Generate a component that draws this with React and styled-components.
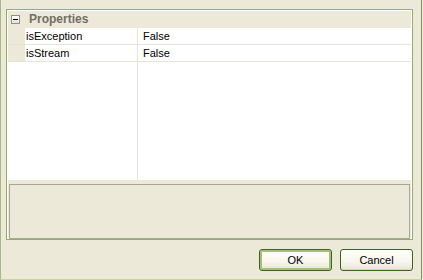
import styled, { createGlobalStyle } from "styled-components";

const Global = createGlobalStyle`
    html, body {
        margin: 0;
        padding: 0;
        background: #ECE9D8;
    }
    * {
        box-sizing: border-box;
    }
`;

const props = [
    { name: "isException", value: "False" },
    { name: "isStream", value: "False" },
];

export default function App() {
    return (
        <Window>
            <Global />
            <Grid>
                <GridBody>
                    <Category>
                        <Toggle />
                        <span>Properties</span>
                    </Category>
                    {props.map((p) => (
                        <Row key={p.name}>
                            <Gutter />
                            <NameCell>{p.name}</NameCell>
                            <ValueCell>{p.value}</ValueCell>
                        </Row>
                    ))}
                    <Filler>
                        <FillerName />
                        <FillerValue />
                    </Filler>
                </GridBody>
                <Splitter />
                <Description />
            </Grid>
            <Buttons>
                <Button $default>OK</Button>
                <Button>Cancel</Button>
            </Buttons>
        </Window>
    );
}

const Window = styled.div`
    width: 422px;
    height: 280px;
    background: #ECE9D8;
    border-left: 1px solid #A6BA84;
    border-right: 1px solid #7E9A55;
    border-bottom: 1px solid #C6D2AA;
    padding: 9px 8px 0 5px;
    display: flex;
    flex-direction: column;
    font-family: "Liberation Sans", Arial, sans-serif;
    font-size: 11px;
    color: #000000;
`;

const Grid = styled.div`
    width: 407px;
    height: 231px;
    border: 1px solid #94AD6C;
    background: #FFFFFF;
    padding: 1px;
    display: flex;
    flex-direction: column;
`;

const GridBody = styled.div`
    height: 169px;
    display: flex;
    flex-direction: column;
    background: #FFFFFF;
`;

const Category = styled.div`
    height: 17px;
    background: #ECE9D8;
    display: flex;
    align-items: center;
    padding-left: 3px;
    span {
        margin-left: 9px;
        font-weight: bold;
        font-size: 12px;
        color: #716F64;
        line-height: 17px;
    }
`;

const Toggle = styled.div`
    position: relative;
    width: 9px;
    height: 9px;
    border: 1px solid #8E8F8F;
    background: linear-gradient(#FFFFFF, #E4E2D8);
    &::after {
        content: "";
        position: absolute;
        left: 1px;
        top: 3px;
        width: 5px;
        height: 1px;
        background: #000000;
    }
`;

const Row = styled.div`
    height: 17px;
    display: flex;
    border-bottom: 1px solid #E5E4D8;
`;

const Gutter = styled.div`
    width: 17px;
    background: #ECE9D8;
`;

const NameCell = styled.div`
    width: 113px;
    padding-left: 1px;
    line-height: 16px;
    border-right: 1px solid #E5E4D8;
`;

const ValueCell = styled.div`
    flex: 1;
    padding-left: 5px;
    line-height: 16px;
`;

const Filler = styled.div`
    flex: 1;
    display: flex;
`;

const FillerName = styled.div`
    width: 130px;
    border-right: 1px solid #E5E4D8;
`;

const FillerValue = styled.div`
    flex: 1;
`;

const Splitter = styled.div`
    height: 4px;
    background: #ECE9D8;
`;

const Description = styled.div`
    flex: 1;
    background: #ECE9D8;
    padding: 0 1px 1px 1px;
    &::before {
        content: "";
        display: block;
        height: 100%;
        border: 1px solid #A9A696;
    }
`;

const Buttons = styled.div`
    display: flex;
    justify-content: flex-end;
    gap: 8px;
    margin-top: 9px;
`;

const Button = styled.button`
    width: 73px;
    height: 22px;
    padding: 0;
    border: 1px solid #3D6321;
    border-radius: 3px;
    background: linear-gradient(#FFFFFB 0%, #F7F5EC 60%, #E9E5D4 100%);
    box-shadow: ${(p) => (p.$default ? "inset 0 0 0 2px #A8BD78" : "inset 0 -1px 0 #DCD7C2")};
    font-family: "Liberation Sans", Arial, sans-serif;
    font-size: 11px;
    color: #000000;
`;
